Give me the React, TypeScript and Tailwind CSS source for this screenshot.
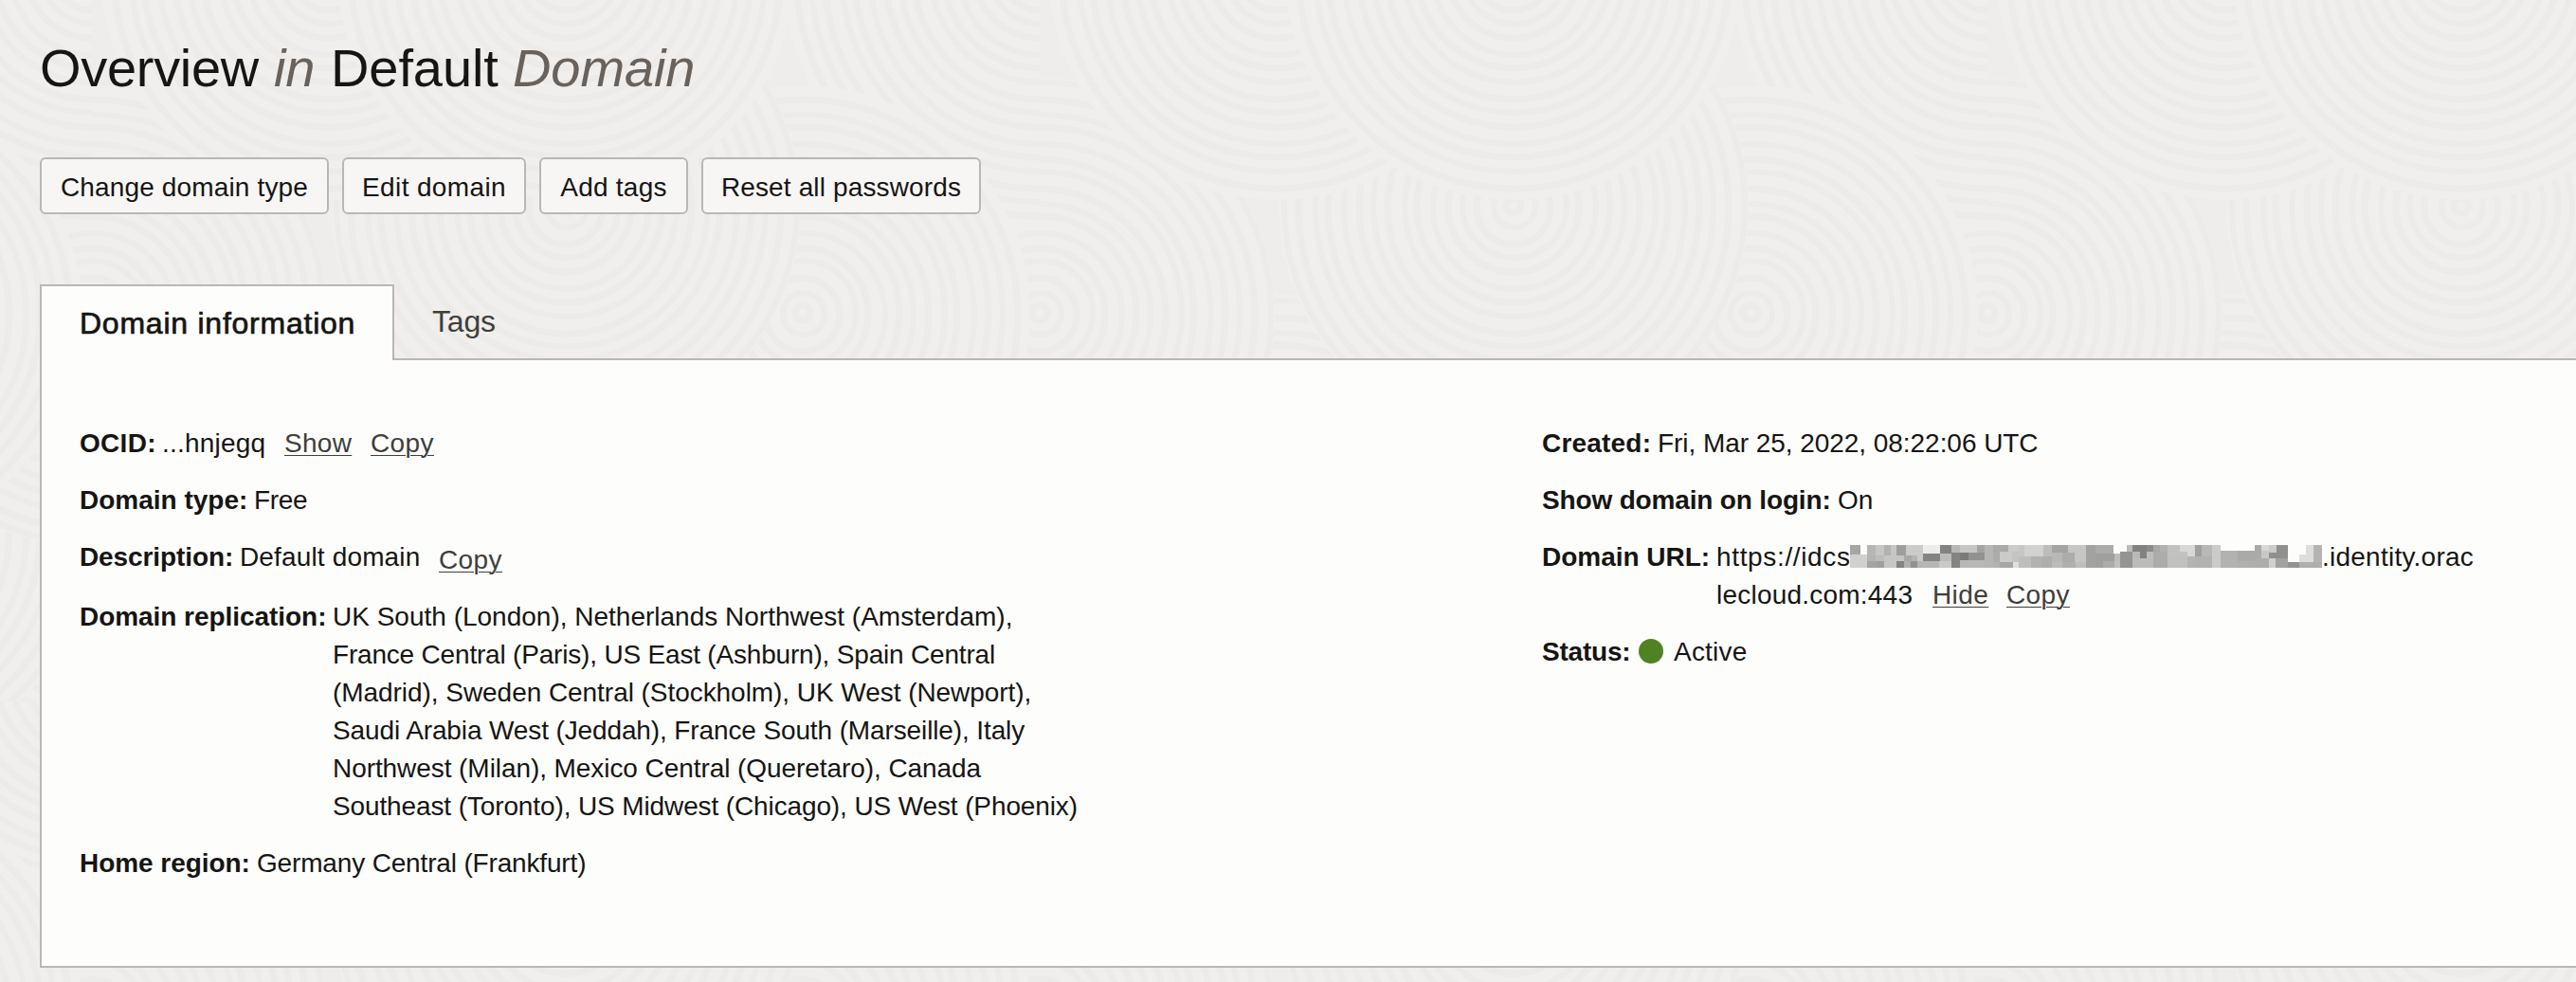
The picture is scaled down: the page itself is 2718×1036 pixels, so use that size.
import type { ReactNode } from 'react';

/* ---------- decorative ring texture ---------- */

type Disc = { x: number; y: number; r: number; side?: 'left' };

const TILE_W = 1000;
const TILE_H = 740;

const discs: Disc[] = [
  { x: 97, y: 590, r: 250 },
  { x: 347, y: 560, r: 250 },
  { x: 597, y: 600, r: 250 },
  { x: 847, y: 560, r: 250 },
  { x: 97, y: 330, r: 248 },
  { x: 97, y: -30, r: 270, side: 'left' },
  { x: 847, y: 330, r: 240 },
  { x: 597, y: 217, r: 248 },
  { x: 347, y: -30, r: 241 },
  { x: 597, y: -30, r: 241 },
];

const ringRadii = (r: number) => {
  const out: number[] = [];
  for (let v = 8, i = 0; v < r; i += 1) {
    out.push(v);
    v += i % 3 === 0 ? 14 : i % 3 === 1 ? 17 : 16;
  }
  return out;
};

function RingDisc({ disc }: { disc: Disc }) {
  return (
    <g clipPath={disc.side === 'left' ? 'url(#left-half)' : undefined}>
      <circle cx={disc.x} cy={disc.y} r={disc.r} fill="#f0efed" />
      {ringRadii(disc.r).map((r, i) => (
        <circle
          key={r}
          cx={disc.x + (i % 2)}
          cy={disc.y + (i % 3)}
          r={r}
          fill="none"
          stroke="#ecebe9"
          strokeWidth={i % 2 ? 6 : 7}
        />
      ))}
    </g>
  );
}

function Texture() {
  const wraps = [-TILE_W, 0, TILE_W];
  return (
    <svg className="absolute inset-0 h-full w-full" aria-hidden="true">
      <defs>
        <clipPath id="left-half">
          <rect x={-300} y={-300} width={397} height={1400} />
        </clipPath>
        <pattern id="rings" width={TILE_W} height={TILE_H} patternUnits="userSpaceOnUse">
          <rect width={TILE_W} height={TILE_H} fill="#eeedeb" />
          {discs.map((disc, i) =>
            wraps.map((dx) => (
              <g key={`${i}:${dx}`} transform={`translate(${dx} 0)`}>
                <RingDisc disc={disc} />
              </g>
            )),
          )}
        </pattern>
      </defs>
      <rect width="100%" height="100%" fill="url(#rings)" />
    </svg>
  );
}

/* ---------- pixelated mask over the hidden part of the URL ---------- */

type Cell = [number, number, number, number, string];

const maskLeft: Cell[] = [
  [36, 69, 33, 63, '#a6a6a4'], [69, 90, 33, 63, '#fdfdfb'], [36, 90, 63, 105, '#d0d0ce'],
  [90, 117, 33, 66, '#b6b6b4'], [117, 144, 33, 66, '#c6c6c4'], [144, 165, 33, 66, '#b2b2b0'],
  [165, 183, 33, 66, '#c6c6c4'], [183, 213, 33, 66, '#9e9e9c'], [213, 267, 33, 66, '#cbcbc9'],
  [267, 321, 33, 60, '#ececea'], [321, 357, 33, 60, '#828280'], [357, 384, 33, 57, '#b8b8b6'],
  [384, 438, 33, 57, '#c6c6c4'], [438, 462, 33, 57, '#a4a4a2'], [462, 489, 33, 105, '#b6b6b4'],
  [489, 537, 33, 54, '#aaaaa8'], [537, 570, 33, 54, '#cbcbc9'], [570, 588, 33, 69, '#c6c6c4'],
  [588, 648, 33, 69, '#d2d2d0'], [648, 675, 33, 69, '#bcbcba'], [675, 726, 33, 57, '#a4a4a2'],
  [726, 750, 33, 57, '#c6c6c4'], [90, 117, 66, 84, '#b4b4b2'], [117, 144, 66, 84, '#bcbcba'],
  [144, 207, 66, 84, '#c6c6c4'], [144, 183, 84, 105, '#c6c6c4'], [207, 231, 66, 84, '#a8a8a6'],
  [231, 249, 66, 84, '#b4b4b2'], [249, 267, 66, 84, '#cbcbc9'], [183, 207, 84, 105, '#848482'],
  [207, 228, 84, 105, '#b0b0ae'], [228, 249, 84, 105, '#929290'], [249, 267, 84, 105, '#b4b4b2'],
  [90, 120, 84, 105, '#a4a4a2'], [120, 144, 84, 105, '#a0a09e'], [267, 321, 60, 84, '#848482'],
  [321, 357, 60, 84, '#bcbcba'], [267, 318, 84, 105, '#b6b6b4'], [318, 357, 84, 105, '#cacac8'],
  [357, 384, 57, 105, '#848482'], [384, 411, 57, 81, '#7a7a78'], [411, 462, 57, 81, '#929290'],
  [384, 462, 81, 105, '#b8b8b6'], [489, 510, 54, 87, '#acacaa'], [510, 549, 54, 87, '#cbcbc9'],
  [549, 570, 54, 87, '#c4c4c2'], [489, 510, 87, 105, '#b2b2b0'], [510, 552, 87, 105, '#a6a6a4'],
  [552, 570, 87, 105, '#e0e0de'], [570, 609, 69, 105, '#bebebc'], [609, 642, 69, 105, '#b2b2b0'],
  [642, 675, 69, 105, '#aeaeac'], [675, 708, 57, 87, '#b8b8b6'], [708, 747, 57, 87, '#acacaa'],
  [747, 750, 57, 87, '#c4c4c2'], [675, 708, 87, 105, '#bcbcba'], [708, 750, 87, 105, '#b0b0ae'],
];

const maskRight: Cell[] = [
  [0, 33, 33, 87, '#c6c6c4'], [0, 33, 87, 105, '#bebebc'], [33, 63, 33, 105, '#a2a2a0'],
  [63, 120, 33, 60, '#acacaa'], [63, 123, 60, 84, '#a0a09e'], [63, 87, 84, 105, '#a0a09e'],
  [87, 123, 84, 105, '#acacaa'], [123, 141, 60, 84, '#bcbcba'], [123, 141, 84, 105, '#c0c0be'],
  [141, 180, 54, 105, '#949492'], [162, 180, 33, 54, '#bcbcba'], [180, 225, 33, 54, '#828280'],
  [225, 246, 33, 54, '#8c8c8a'], [204, 225, 54, 75, '#828280'], [180, 204, 54, 75, '#b8b8b6'],
  [225, 246, 54, 75, '#bebebc'], [180, 246, 75, 105, '#bcbcba'], [246, 267, 33, 54, '#a8a8a6'],
  [267, 291, 33, 54, '#b2b2b0'], [246, 291, 54, 105, '#acacaa'], [291, 330, 33, 69, '#c2c2c0'],
  [330, 378, 33, 54, '#d8d8d6'], [330, 354, 54, 69, '#c2c2c0'], [354, 378, 54, 69, '#d8d8d6'],
  [291, 354, 69, 105, '#c0c0be'], [354, 378, 69, 105, '#b4b4b2'], [378, 399, 33, 69, '#a0a09e'],
  [399, 432, 33, 69, '#b8b8b6'], [378, 432, 69, 105, '#b2b2b0'], [432, 459, 33, 105, '#cbcbc9'],
  [459, 513, 51, 105, '#b2b2b0'], [513, 567, 51, 84, '#aaaaa8'], [513, 567, 84, 105, '#b0b0ae'],
  [567, 588, 33, 75, '#aaaaa8'], [588, 612, 33, 51, '#d8d8d6'], [612, 636, 33, 57, '#cbcbc9'],
  [588, 612, 51, 75, '#c8c8c6'], [612, 672, 57, 75, '#90908e'], [636, 672, 33, 57, '#90908e'],
  [567, 612, 75, 105, '#aeaeac'], [612, 633, 75, 105, '#d0d0ce'], [633, 672, 75, 105, '#a2a2a0'],
  [708, 753, 63, 87, '#dededc'], [729, 753, 33, 63, '#dededc'], [753, 780, 33, 87, '#b4b4b2'],
  [672, 708, 87, 105, '#929290'], [708, 780, 87, 105, '#aeaeac'],
];

function Cells({ cells, dx }: { cells: Cell[]; dx: number }) {
  return (
    <>
      {cells.map(([x0, x1, y0, y1, fill], i) => (
        <rect key={i} x={dx + x0} y={y0 - 33} width={x1 - x0} height={y1 - y0} fill={fill} />
      ))}
    </>
  );
}

function UrlMask() {
  return (
    <svg
      className="mt-[7px] h-6 w-[498px] shrink-0"
      viewBox="0 0 1494 72"
      shapeRendering="crispEdges"
      aria-hidden="true"
    >
      <Cells cells={maskLeft} dx={-36} />
      <Cells cells={maskRight} dx={714} />
    </svg>
  );
}

/* ---------- page ---------- */

function Button({ className, children }: { className: string; children: ReactNode }) {
  return (
    <button
      className={`flex h-[60px] items-center justify-center rounded-md border-2 border-[#bcb6b1] bg-[#f7f6f5] pt-1 whitespace-nowrap ${className}`}
    >
      {children}
    </button>
  );
}

function Row({ label, labelClass, children }: { label: string; labelClass: string; children: ReactNode }) {
  return (
    <div className="flex whitespace-nowrap">
      <dt className={`shrink-0 font-bold ${labelClass}`}>{label}</dt>
      <dd className="flex">{children}</dd>
    </div>
  );
}

function TextLink({ className = '', children }: { className?: string; children: string }) {
  return (
    <span className={`shrink-0 ${className}`}>
      <a className="text-[#403e3b] underline decoration-1 underline-offset-[3px]">{children}</a>
    </span>
  );
}

export default function App() {
  return (
    <div className="relative h-[1036px] w-full overflow-hidden bg-[#efeeec] font-['Liberation_Sans',sans-serif] text-[28px] leading-10 text-[#161513]">
      <Texture />
      <div className="relative flex flex-col pt-10 pl-[42px]">
        <h1 className="flex text-[56px] leading-[64px] whitespace-nowrap">
          <span className="w-[247px] tracking-[-0.3px]">Overview</span>
          <span className="w-[60px] tracking-[-0.2px] text-[#69615c] italic">in</span>
          <span className="w-[192px] tracking-[-0.1px]">Default</span>
          <span className="tracking-[-0.1px] text-[#69615c] italic">Domain</span>
        </h1>

        <div className="mt-[62px] flex gap-3.5">
          <Button className="w-[305px] tracking-[0.15px]">Change domain type</Button>
          <Button className="w-[194px] tracking-[0.36px]">Edit domain</Button>
          <Button className="w-[157px] tracking-[0.25px]">Add tags</Button>
          <Button className="w-[295px] tracking-[0.14px]">Reset all passwords</Button>
        </div>

        <div className="relative z-10 mt-[74px] -mb-0.5 flex h-20 text-[32px] whitespace-nowrap">
          <div className="w-[374px] border-2 border-b-0 border-[#bcb6b1] bg-[#fdfdfb] pl-10 leading-[79px] tracking-[0.76px] [-webkit-text-stroke:0.7px_#161513]">
            Domain information
          </div>
          <div className="pl-10 leading-[78px] tracking-[-0.2px] text-[#403e3b]">Tags</div>
        </div>

        <div className="flex h-[643px] border-2 border-r-0 border-[#bcb6b1] bg-[#fdfdfb] pt-[68px] pl-10">
          <dl className="flex w-[1543px] shrink-0 flex-col gap-5">
            <Row label="OCID:" labelClass="w-[87px] tracking-[0.3px]">
              <span className="w-[129px] tracking-[0.2px]">...hnjegq</span>
              <TextLink className="w-[91px] tracking-[0.3px]">Show</TextLink>
              <TextLink className="tracking-[0.4px]">Copy</TextLink>
            </Row>
            <Row label="Domain type:" labelClass="w-[184px]">
              <span className="tracking-[-0.3px]">Free</span>
            </Row>
            <Row label="Description:" labelClass="w-[169px] tracking-[-0.1px]">
              <span className="w-[210px] tracking-[0.15px]">Default domain</span>
              <TextLink className="pt-[3px] tracking-[0.4px]">Copy</TextLink>
            </Row>
            <Row label="Domain replication:" labelClass="w-[267px] tracking-[-0.05px]">
              <span className="flex flex-col">
                <span>UK South (London), Netherlands Northwest (Amsterdam),</span>
                <span className="tracking-[-0.19px]">France Central (Paris), US East (Ashburn), Spain Central</span>
                <span className="tracking-[-0.05px]">(Madrid), Sweden Central (Stockholm), UK West (Newport),</span>
                <span className="tracking-[-0.12px]">Saudi Arabia West (Jeddah), France South (Marseille), Italy</span>
                <span className="tracking-[-0.07px]">Northwest (Milan), Mexico Central (Queretaro), Canada</span>
                <span className="tracking-[-0.12px]">Southeast (Toronto), US Midwest (Chicago), US West (Phoenix)</span>
              </span>
            </Row>
            <Row label="Home region:" labelClass="w-[187px] tracking-[-0.05px]">
              <span className="tracking-[-0.16px]">Germany Central (Frankfurt)</span>
            </Row>
          </dl>

          <dl className="flex flex-col gap-5">
            <Row label="Created:" labelClass="w-[122px] tracking-[0.2px]">
              <span className="tracking-[-0.05px]">Fri, Mar 25, 2022, 08:22:06 UTC</span>
            </Row>
            <Row label="Show domain on login:" labelClass="w-[312px] tracking-[-0.16px]">
              <span>On</span>
            </Row>
            <Row label="Domain URL:" labelClass="w-[184px] tracking-[-0.02px]">
              <div className="flex flex-col">
                <div className="flex">
                  <span className="w-[141px] tracking-[0.65px]">https://idcs</span>
                  <UrlMask />
                  <span className="tracking-[0.24px]">.identity.orac</span>
                </div>
                <div className="flex">
                  <span className="w-[228px] tracking-[0.22px]">lecloud.com:443</span>
                  <TextLink className="w-[78px] tracking-[0.4px]">Hide</TextLink>
                  <TextLink className="tracking-[0.4px]">Copy</TextLink>
                </div>
              </div>
            </Row>
            <Row label="Status:" labelClass="w-[102px] tracking-[-0.2px]">
              <span className="mt-1.5 mr-[11px] h-[26px] w-[26px] rounded-full bg-[#508223]" />
              <span className="tracking-[0.2px]">Active</span>
            </Row>
          </dl>
        </div>
      </div>
    </div>
  );
}
